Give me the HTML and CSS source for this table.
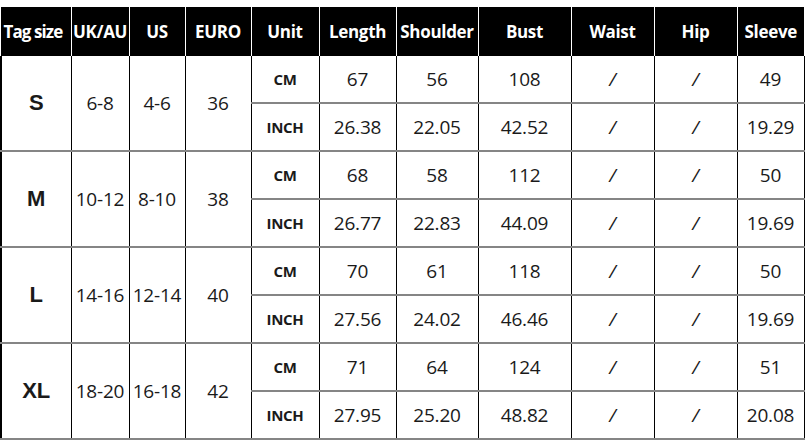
FILE: index.html
```html
<!DOCTYPE html>
<html>
<head>
<meta charset="utf-8">
<link rel="stylesheet" href="styles.css">
</head>
<body>
<table class="chart">
  <colgroup>
    <col class="c1"><col class="c2"><col class="c3"><col class="c4"><col class="c5"><col class="c6"><col class="c7"><col class="c8"><col class="c9"><col class="c10"><col class="c11">
  </colgroup>
  <thead>
    <tr>
      <th class="tag">Tag size</th><th>UK/AU</th><th>US</th><th>EURO</th><th>Unit</th><th>Length</th><th>Shoulder</th><th>Bust</th><th>Waist</th><th>Hip</th><th>Sleeve</th>
    </tr>
  </thead>
  <tbody>
    <tr><td rowspan="2" class="size">S</td><td rowspan="2">6-8</td><td rowspan="2">4-6</td><td rowspan="2">36</td><td class="unit">CM</td><td>67</td><td>56</td><td>108</td><td class="sl">/</td><td class="sl">/</td><td>49</td></tr>
    <tr><td class="unit">INCH</td><td>26.38</td><td>22.05</td><td>42.52</td><td class="sl">/</td><td class="sl">/</td><td>19.29</td></tr>
    <tr><td rowspan="2" class="size">M</td><td rowspan="2">10-12</td><td rowspan="2">8-10</td><td rowspan="2">38</td><td class="unit">CM</td><td>68</td><td>58</td><td>112</td><td class="sl">/</td><td class="sl">/</td><td>50</td></tr>
    <tr><td class="unit">INCH</td><td>26.77</td><td>22.83</td><td>44.09</td><td class="sl">/</td><td class="sl">/</td><td>19.69</td></tr>
    <tr><td rowspan="2" class="size">L</td><td rowspan="2">14-16</td><td rowspan="2">12-14</td><td rowspan="2">40</td><td class="unit">CM</td><td>70</td><td>61</td><td>118</td><td class="sl">/</td><td class="sl">/</td><td>50</td></tr>
    <tr><td class="unit">INCH</td><td>27.56</td><td>24.02</td><td>46.46</td><td class="sl">/</td><td class="sl">/</td><td>19.69</td></tr>
    <tr><td rowspan="2" class="size">XL</td><td rowspan="2">18-20</td><td rowspan="2">16-18</td><td rowspan="2">42</td><td class="unit">CM</td><td>71</td><td>64</td><td>124</td><td class="sl">/</td><td class="sl">/</td><td>51</td></tr>
    <tr><td class="unit">INCH</td><td>27.95</td><td>25.20</td><td>48.82</td><td class="sl">/</td><td class="sl">/</td><td>20.08</td></tr>
  </tbody>
</table>
</body>
</html>
```
FILE: styles.css
```css
html, body {
  margin: 0;
  padding: 0;
  background: #fff;
}
body {
  padding-top: 7px;
}
.chart {
  border-collapse: collapse;
  table-layout: fixed;
  width: 804px;
  font-family: "Open Sans", "Noto Sans", sans-serif;
  color: #1a1a1a;
}
.c1 { width: 70px; }
.c2 { width: 58px; }
.c3 { width: 56px; }
.c4 { width: 66px; }
.c5 { width: 68px; }
.c6 { width: 77px; }
.c7 { width: 82px; }
.c8 { width: 93px; }
.c9 { width: 83px; }
.c10 { width: 83px; }
.c11 { width: 67px; }

.chart th {
  background: #000;
  color: #fff;
  font-weight: 700;
  font-size: 17px;
  letter-spacing: -0.3px;
  height: 49px;
  padding: 0;
  text-align: center;
  border-left: 1px solid #fff;
  white-space: nowrap;
}
.chart th:first-child {
  border-left: 1px solid #000;
}
.chart th.tag {
  text-align: left;
  padding-left: 2px;
  letter-spacing: -0.9px;
}
.chart td {
  height: 46px;
  padding: 0;
  text-align: center;
  font-size: 19px;
  letter-spacing: -0.2px;
  border-left: 1px solid #000;
  border-right: 1px solid #000;
  border-bottom: 2px solid #858585;
  white-space: nowrap;
}
.chart td.size {
  font-family: "Liberation Sans", Arial, sans-serif;
  font-weight: 700;
  font-size: 22px;
  letter-spacing: 0;
  border-left: 2px solid #000;
}
.chart td.unit {
  font-weight: 700;
  font-size: 15px;
  letter-spacing: -0.3px;
}
.chart td.sl {
  font-style: italic;
}
```
